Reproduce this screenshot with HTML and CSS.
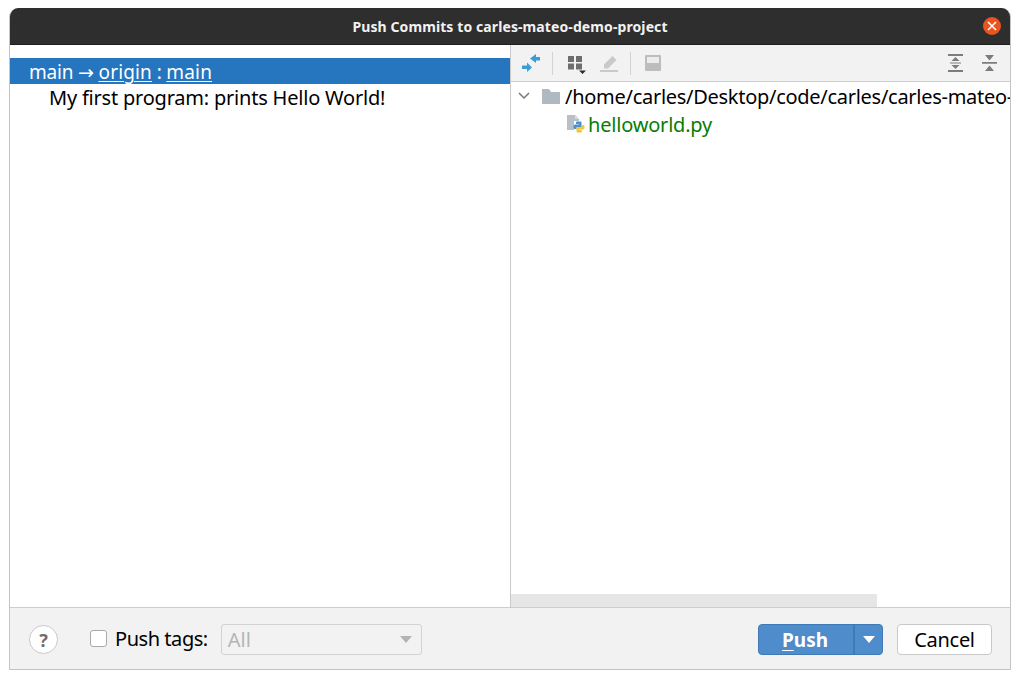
FILE: index.html
```html
<!DOCTYPE html>
<html lang="en">
<head>
<meta charset="utf-8">
<title>Push Commits</title>
<link rel="stylesheet" href="styles.css">
</head>
<body>
<div class="window">
  <header class="titlebar">
    <span class="title">Push Commits to carles-mateo-demo-project</span>
    <span class="close"><svg width="10" height="10" viewBox="0 0 10 10"><path d="M1 1l8 8M9 1l-8 8" stroke="#fff" stroke-width="1.5"/></svg></span>
  </header>
  <main class="panes">
    <section class="left">
      <div class="branch-row"><span class="branch-text">main <span class="arrow">→</span> <u>origin</u> : <u>main</u></span></div>
      <div class="commit-row">My first program: prints Hello World!</div>
    </section>
    <section class="right">
      <div class="toolbar">
        <svg class="ic merge" width="20" height="22" viewBox="0 0 20 22"><path d="M9 6.500L15 2V5H19V8.500H15V11z" fill="#389fd6"/><path d="M11 15.500L6 20V17H1V13.500H6V10.500z" fill="#389fd6"/></svg>
        <i class="sep"></i>
        <svg class="ic grid" width="18" height="22" viewBox="0 0 18 22"><path d="M0 4h6v6H0zM8 4h6v6H8zM0 11.500h6v6H0zM8 11.500h6v6H8z" fill="#6e6e6e"/><path d="M11 18.500h7L14.500 22z" fill="#2b2b2b"/></svg>
        <svg class="ic pen" width="19" height="22" viewBox="0 0 19 22"><path d="M0 18h18v2H0zM4 12.500L12.500 4l4 4L8 16.500H4z" fill="#c9c9c9"/></svg>
        <i class="sep second"></i>
        <svg class="ic save" width="16" height="22" viewBox="0 0 16 22"><rect x="0" y="3" width="16" height="16" rx="1" fill="#bdbdbd"/><path d="M2 5h12v6H2z" fill="#ececec"/></svg>
        <span class="spacer"></span>
        <svg class="ic" width="15" height="22" viewBox="0 0 15 22"><path d="M0 2h15v2H0zM0 18h15v2H0zM2 10.500h11v1H2z" fill="#7c7c7c"/><path d="M7.500 5l4 4h-8zM7.500 17l-4-4h8z" fill="#7c7c7c"/></svg>
        <svg class="ic last" width="15" height="22" viewBox="0 0 15 22"><path d="M0 10h15v1.800H0z" fill="#7c7c7c"/><path d="M3 3h9L7.500 8.500zM7.500 13.500L12 19H3z" fill="#7c7c7c"/></svg>
      </div>
      <div class="tree">
        <div class="tree-row root">
          <svg class="chev" width="12" height="8" viewBox="0 0 12 8"><path d="M1 1l5 5 5-5" fill="none" stroke="#777" stroke-width="1.500"/></svg>
          <svg class="folder" width="18" height="15" viewBox="0 0 18 15"><path d="M0 0h7l2 3h9v12H0z" fill="#afb9c1"/></svg>
          <span class="path">/home/carles/Desktop/code/carles/carles-mateo-demo-project</span>
        </div>
        <div class="tree-row file">
          <svg class="py" width="18" height="18" viewBox="0 0 18 18"><path d="M0 0h8l4 4v2H7v9H0z" fill="#b7c0c8"/><path d="M8 0l4 4H8z" fill="#d5dbe0"/><g transform="translate(6 6)"><path d="M4 .5h3.500a1 1 0 0 1 1 1V5a1 1 0 0 1-1 1H4.500a1 1 0 0 0-1 1V8H2A1.500 1.500 0 0 1 .5 6.500V5A1.500 1.500 0 0 1 2 3.500H6V3H3V1.500a1 1 0 0 1 1-1z" fill="#4a90d0"/><path d="M8 11.500H4.500a1 1 0 0 1-1-1V7a1 1 0 0 1 1-1H7.500a1 1 0 0 0 1-1V4H10a1.500 1.500 0 0 1 1.500 1.500V7A1.500 1.500 0 0 1 10 8.500H6V9H9v1.500a1 1 0 0 1-1 1z" fill="#f3c63a"/></g></svg>
          <span class="fname">helloworld.py</span>
        </div>
        <div class="hscroll"></div>
      </div>
    </section>
  </main>
  <footer class="footer">
    <span class="help">?</span>
    <label class="tags"><span class="check"></span><span class="tags-text">Push tags:</span></label>
    <div class="combo"><span>All</span><i class="tri gray"></i></div>
    <span class="spacer"></span>
    <div class="push"><span class="push-main"><u>P</u>ush</span><span class="push-arrow"><i class="tri"></i></span></div>
    <button class="cancel">Cancel</button>
  </footer>
</div>
</body>
</html>
```
FILE: styles.css
```css
* { box-sizing: border-box; }
html, body { margin: 0; height: 100%; background: #fff; overflow: hidden; }
body { padding: 8px 9px 9px; font-family: "Noto Sans", sans-serif; font-size: 20px; color: #000; }
.window { width: 1002px; height: 662px; display: flex; flex-direction: column; border: 1px solid #c4c4c4; border-top: 0; border-radius: 9px 9px 0 0; overflow: hidden; }
.titlebar { height: 37px; flex: none; margin: 0 -1px; background: #2f2e2e; border-bottom: 1px solid #1e1e1e; display: flex; align-items: center; justify-content: center; position: relative; }
.title { color: #f2f2f2; font-size: 14px; font-weight: 700; letter-spacing: .1px; }
.close { position: absolute; right: 10px; top: 9px; width: 18px; height: 18px; border-radius: 50%; background: #e95420; display: flex; align-items: center; justify-content: center; }
.panes { flex: 1; display: flex; min-height: 0; }
.left { width: 501px; flex: none; border-right: 1px solid #c9c9c9; padding-top: 13px; }
.branch-row { height: 26px; background: #2675bf; color: #fff; padding-left: 19px; display: flex; align-items: center; font-size: 19px; letter-spacing: -.2px; white-space: pre; }
.branch-text { position: relative; top: 1px; }
.arrow { font-family: "DejaVu Sans", sans-serif; font-size: 19px; }
.branch-row u { text-underline-offset: 2px; text-decoration-thickness: 1px; letter-spacing: .15px; }
.commit-row { height: 27px; padding-left: 39px; display: flex; align-items: center; letter-spacing: -.21px; }
.right { flex: 1; min-width: 0; display: flex; flex-direction: column; }
.toolbar { height: 37px; flex: none; background: #f2f2f2; border-bottom: 1px solid #cdcdcd; display: flex; align-items: center; padding: 0 13px 0 10px; }
.ic { flex: none; display: block; }
.sep { width: 1px; height: 23px; background: #d2d2d2; margin: 0 15px 0 11px; flex: none; }
.pen { margin-left: 14px; }
.second { margin: 0 14px 0 11px; }
.spacer { flex: 1; }
.last { margin-left: 19px; }
.tree { flex: 1; position: relative; overflow: hidden; background: #fff; min-height: 0; }
.tree-row { height: 28px; display: flex; align-items: center; white-space: nowrap; }
.root { padding-left: 7px; }
.folder { margin-left: 12px; margin-right: 5px; flex: none; }
.chev { flex: none; }
.path { letter-spacing: -.28px; }
.file { padding-left: 56px; }
.fname { color: #067d06; margin-left: 3px; letter-spacing: -.2px; }
.py { flex: none; }
.hscroll { position: absolute; left: 0; bottom: 0; width: 366px; height: 13px; background: #e6e6e6; }
.footer { height: 62px; flex: none; background: #f2f2f2; border-top: 1px solid #cdcdcd; display: flex; align-items: center; padding: 2px 18px 0 19px; }
.help { width: 29px; height: 29px; border-radius: 50%; background: #fff; border: 1px solid #c9c9c9; display: flex; align-items: center; justify-content: center; font-weight: 700; font-size: 18px; color: #6e6e6e; margin-right: 32px; }
.tags { display: flex; align-items: center; margin-right: 13px; }
.check { width: 17px; height: 17px; background: #fff; border: 1px solid #a9a9a9; border-radius: 3px; margin-right: 8px; position: relative; top: -1px; }
.tags-text { position: relative; top: -1px; letter-spacing: -.45px; }
.combo { width: 201px; height: 31px; border: 1px solid #d2d2d2; border-radius: 3px; display: flex; align-items: center; justify-content: space-between; padding: 0 9px 0 6px; color: #b5b5b5; background: #f2f2f2; }
.tri { width: 0; height: 0; border-left: 6px solid transparent; border-right: 6px solid transparent; border-top: 7px solid #fff; display: block; }
.tri.gray { border-top-color: #b3b3b3; }
.push { width: 125px; height: 31px; display: flex; background: #4f8ccb; border: 1px solid #3f7ab6; border-radius: 4px; color: #fff; font-weight: 700; font-size: 19px; margin-right: 14px; }
.push-main { flex: 1; display: flex; align-items: center; justify-content: center; white-space: pre; padding-right: 2px; }
.push-main u { text-underline-offset: 3px; text-decoration-thickness: 1px; }
.push-arrow { width: 29px; border-left: 2px solid #3f7ab6; display: flex; align-items: center; justify-content: center; }
.cancel { width: 95px; height: 31px; background: #fff; border: 1px solid #c9c9c9; border-radius: 4px; font: inherit; color: #000; padding: 0; letter-spacing: -.3px; }
```
